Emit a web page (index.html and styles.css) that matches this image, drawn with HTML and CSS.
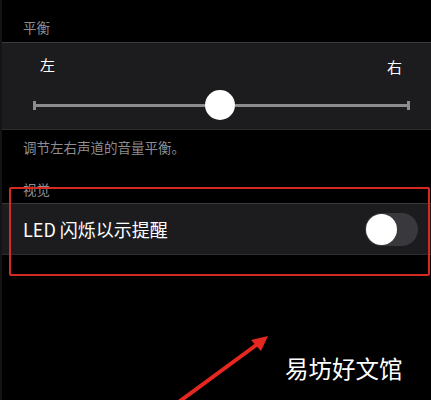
FILE: index.html
```html
<!DOCTYPE html>
<html lang="zh">
<head>
<meta charset="utf-8">
<link rel="stylesheet" href="styles.css">
</head>
<body>
<div class="page">
  <div class="section-title first">平衡</div>
  <div class="card balance">
    <div class="labels"><span>左</span><span class="right">右</span></div>
    <div class="slider">
      <div class="track left"></div>
      <div class="thumb"></div>
      <div class="track rest"></div>
    </div>
  </div>
  <div class="note">调节左右声道的音量平衡。</div>
  <div class="section-title second">视觉</div>
  <div class="card row">
    <span class="row-label">LED 闪烁以示提醒</span>
    <div class="toggle"><div class="knob"></div></div>
  </div>

  <div class="highlight"></div>
  <svg class="arrow" width="431" height="400" viewBox="0 0 431 400">
    <line x1="176" y1="404" x2="259" y2="343" stroke="#e5271f" stroke-width="4" stroke-linecap="round"/>
    <polygon points="268,336 251,340 261,351" fill="#e5271f"/>
  </svg>
  <div class="watermark">易坊好文馆</div>
</div>
</body>
</html>
```
FILE: styles.css
```css
html, body {
  margin: 0;
  padding: 0;
  background: #000;
}
.page {
  position: relative;
  width: 431px;
  height: 400px;
  overflow: hidden;
  background: #000;
  font-family: "Noto Sans CJK SC", "Noto Sans", sans-serif;
  box-sizing: border-box;
  border-left: 2px solid #141414;
}
.section-title {
  color: #8d8d92;
  font-size: 13.5px;
  line-height: 20px;
  padding-left: 21px;
}
.section-title.first {
  padding-top: 17px;
  height: 25px;
}
.section-title.second {
  padding-top: 22px;
  margin-bottom: 4px;
}
.card {
  background: #1c1c1e;
  border-top: 1px solid #3a3a3c;
  border-bottom: 1px solid #2e2e30;
  box-sizing: border-box;
}
.balance {
  height: 88px;
  padding-top: 12px;
}
.labels {
  display: flex;
  justify-content: space-between;
  color: #fff;
  font-size: 15px;
  line-height: 20px;
  padding: 0 29px 0 38px;
}
.labels .right {
  position: relative;
  top: 2px;
}
.slider {
  display: flex;
  align-items: center;
  height: 30px;
  margin: 15px 21px 0 31px;
}
.track {
  height: 3px;
  background: #8c8c8f;
  position: relative;
}
.track.left {
  width: 172px;
}
.track.rest {
  flex: 1;
}
.track.left::before,
.track.rest::after {
  content: "";
  position: absolute;
  top: -3px;
  width: 3px;
  height: 9px;
  background: #8c8c8f;
}
.track.left::before { left: 0; }
.track.rest::after { right: 0; }
.thumb {
  width: 30px;
  height: 30px;
  border-radius: 50%;
  background: #fff;
  flex: none;
}
.note {
  color: #8d8d92;
  font-size: 13.5px;
  line-height: 20px;
  padding: 7px 0 0 21px;
}
.row {
  height: 52px;
  display: flex;
  align-items: center;
  justify-content: space-between;
  padding: 0 13px 0 21px;
}
.row-label {
  color: #fff;
  font-size: 18px;
  line-height: 24px;
}
.toggle {
  width: 53px;
  height: 33px;
  border-radius: 17px;
  background: #39393d;
  display: flex;
  align-items: center;
  padding-left: 1px;
  box-sizing: border-box;
}
.knob {
  width: 31px;
  height: 31px;
  border-radius: 50%;
  background: #fff;
}
.highlight {
  position: absolute;
  left: 7px;
  top: 187px;
  width: 421px;
  height: 89px;
  border: 2px solid #d42a22;
  border-radius: 2px;
  box-sizing: border-box;
}
.arrow {
  position: absolute;
  left: -2px;
  top: 0;
}
.watermark {
  position: absolute;
  left: 283px;
  top: 352px;
  color: #fff;
  font-size: 23.5px;
  line-height: 32px;
  font-weight: 400;
}
```
